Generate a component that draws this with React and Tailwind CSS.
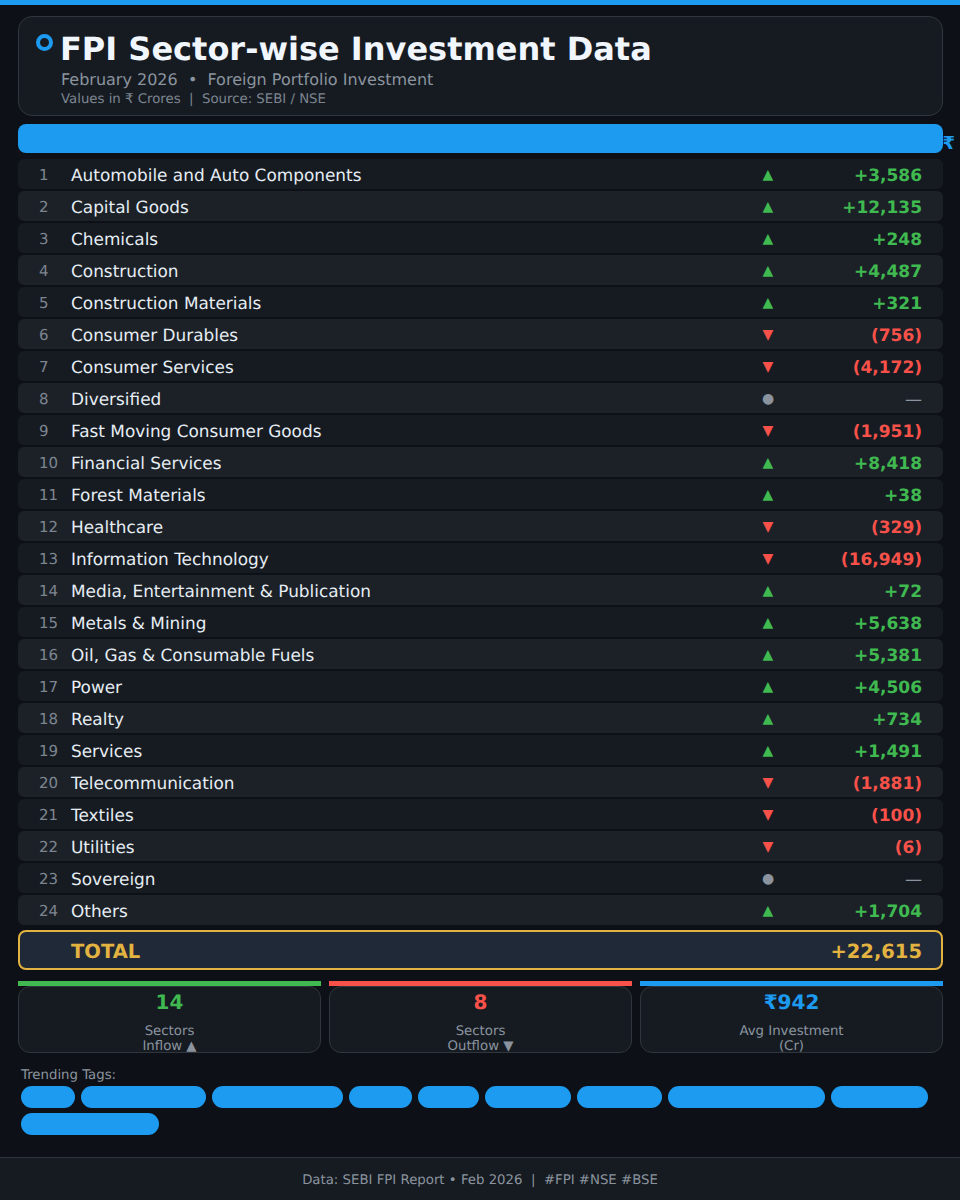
const sectors = [
  ["Automobile and Auto Components", "+3,586", "up"],
  ["Capital Goods", "+12,135", "up"],
  ["Chemicals", "+248", "up"],
  ["Construction", "+4,487", "up"],
  ["Construction Materials", "+321", "up"],
  ["Consumer Durables", "(756)", "down"],
  ["Consumer Services", "(4,172)", "down"],
  ["Diversified", "—", "flat"],
  ["Fast Moving Consumer Goods", "(1,951)", "down"],
  ["Financial Services", "+8,418", "up"],
  ["Forest Materials", "+38", "up"],
  ["Healthcare", "(329)", "down"],
  ["Information Technology", "(16,949)", "down"],
  ["Media, Entertainment & Publication", "+72", "up"],
  ["Metals & Mining", "+5,638", "up"],
  ["Oil, Gas & Consumable Fuels", "+5,381", "up"],
  ["Power", "+4,506", "up"],
  ["Realty", "+734", "up"],
  ["Services", "+1,491", "up"],
  ["Telecommunication", "(1,881)", "down"],
  ["Textiles", "(100)", "down"],
  ["Utilities", "(6)", "down"],
  ["Sovereign", "—", "flat"],
  ["Others", "+1,704", "up"],
];

const tagWidths = ["w-[54px]", "w-[125px]", "w-[131px]", "w-[63px]", "w-[60.5px]", "w-[86.3px]", "w-[85.5px]", "w-[157px]", "w-[97px]", "w-[138px]"];

const arrowClass = { up: "text-[#3fb950]", down: "text-[#f85149]", flat: "text-[#8b949e]" };
const arrowGlyph = { up: "▲", down: "▼", flat: "●" };
const valueClass = { up: "text-[#3fb950] font-bold", down: "text-[#f85149] font-bold", flat: "text-[#8b949e] font-normal" };

function Row({ index, name, value, trend }) {
  const odd = index % 2 === 1;
  return (
    <div className={`flex items-center h-[30px] pt-[6px] rounded-md ${odd ? "bg-[#161b22]" : "bg-[#1c2128]"}`}>
      <span className="w-[53px] pl-[21px] text-[15px] text-[#7d8590] shrink-0 -mt-[3px]">{index}</span>
      <span className="flex-1 text-[16.9px] text-[#e6edf3] -mt-[2px]">{name}</span>
      <span className={`w-[20px] text-center text-[14px] shrink-0 -mt-[4px] ${arrowClass[trend]}`}>{arrowGlyph[trend]}</span>
      <span className={`w-[165px] pr-[21px] text-right text-[17px] shrink-0 ${valueClass[trend]}`}>{value}</span>
    </div>
  );
}

function Stat({ barClass, numClass, num, line1, line2 }) {
  return (
    <div className="flex-1">
      <div className={`h-[5px] ${barClass}`} />
      <div className="h-[67px] bg-[#161b22] border border-[#30363d] rounded-[12px] flex flex-col items-center overflow-hidden">
        <div className={`mt-[1px] text-[20px] leading-[28px] font-bold ${numClass}`}>{num}</div>
        <div className="mt-[8px] text-[13.3px] leading-[15px] text-[#8b949e] text-center">{line1}</div>
        <div className="text-[13.3px] leading-[15px] text-[#8b949e] text-center">{line2}</div>
      </div>
    </div>
  );
}

export default function App() {
  return (
    <div className="w-[960px] h-[1200px] bg-[#0d1117] flex flex-col overflow-hidden font-['DejaVu_Sans',sans-serif] [text-rendering:geometricPrecision]">
      <div className="h-[5px] bg-[#1d9bf0] shrink-0" />

      <div className="flex-1 pl-[18px] pr-[17px] pt-[11px]">
        <div className="h-[100px] bg-[#161b22] border border-[#30363d] rounded-[14px] flex pl-[17px] pt-[15px]">
          <div className="w-[17px] h-[17px] rounded-full border-[4px] border-[#1d9bf0] mt-[2px] mr-[8px] shrink-0" />
          <div>
            <h1 className="-ml-px text-[32px] leading-[34px] font-bold text-[#f0f6fc]">FPI Sector-wise Investment Data</h1>
            <p className="mt-[4px] text-[16px] leading-[20px] text-[#8b949e]">February 2026 &nbsp;•&nbsp; Foreign Portfolio Investment</p>
            <p className="mt-[1px] text-[13.3px] leading-[18px] text-[#7d8590]">Values in ₹ Crores &nbsp;|&nbsp; Source: SEBI / NSE</p>
          </div>
        </div>

        <div className="mt-[8px] h-[29px] bg-[#1d9bf0] rounded-[8px] flex items-center justify-end">
          <span className="mr-[-12px] mt-[10px] text-[18px] font-bold text-[#1d9bf0]">₹</span>
        </div>

        <div className="mt-[6px] flex flex-col gap-[2px]">
          {sectors.map(([name, value, trend], i) => (
            <Row key={name} index={i + 1} name={name} value={value} trend={trend} />
          ))}
        </div>

        <div className="mt-[5px] h-[40px] pt-[4px] bg-[#1f2937] border-2 border-[#e3b341] rounded-[8px] flex items-center pl-[51px] pr-[19px] justify-between text-[#e3b341] font-bold">
          <span className="text-[19.5px]">TOTAL</span>
          <span className="text-[19.5px]">+22,615</span>
        </div>

        <div className="mt-[11px] flex gap-[8px]">
          <Stat barClass="bg-[#3fb950]" numClass="text-[#3fb950]" num="14" line1="Sectors" line2="Inflow ▲" />
          <Stat barClass="bg-[#f85149]" numClass="text-[#f85149]" num="8" line1="Sectors" line2="Outflow ▼" />
          <Stat barClass="bg-[#1d9bf0]" numClass="text-[#1d9bf0]" num="₹942" line1="Avg Investment" line2="(Cr)" />
        </div>

        <div className="mt-[15px] px-[3px]">
          <div className="text-[13.3px] leading-[16px] text-[#8b949e]">Trending Tags:</div>
          <div className="mt-[2px] flex flex-wrap gap-x-[6px] gap-y-[5px]">
            {tagWidths.map((w) => (
              <span key={w} className={`h-[22px] rounded-full bg-[#1d9bf0] ${w}`} />
            ))}
          </div>
        </div>
      </div>

      <div className="h-[43px] shrink-0 bg-[#161b22] border-t border-[#30363d] flex items-center justify-center pt-[4px] text-[13.3px] text-[#8b949e]">
        Data: SEBI FPI Report • Feb 2026 &nbsp;|&nbsp; #FPI #NSE #BSE
      </div>
    </div>
  );
}
